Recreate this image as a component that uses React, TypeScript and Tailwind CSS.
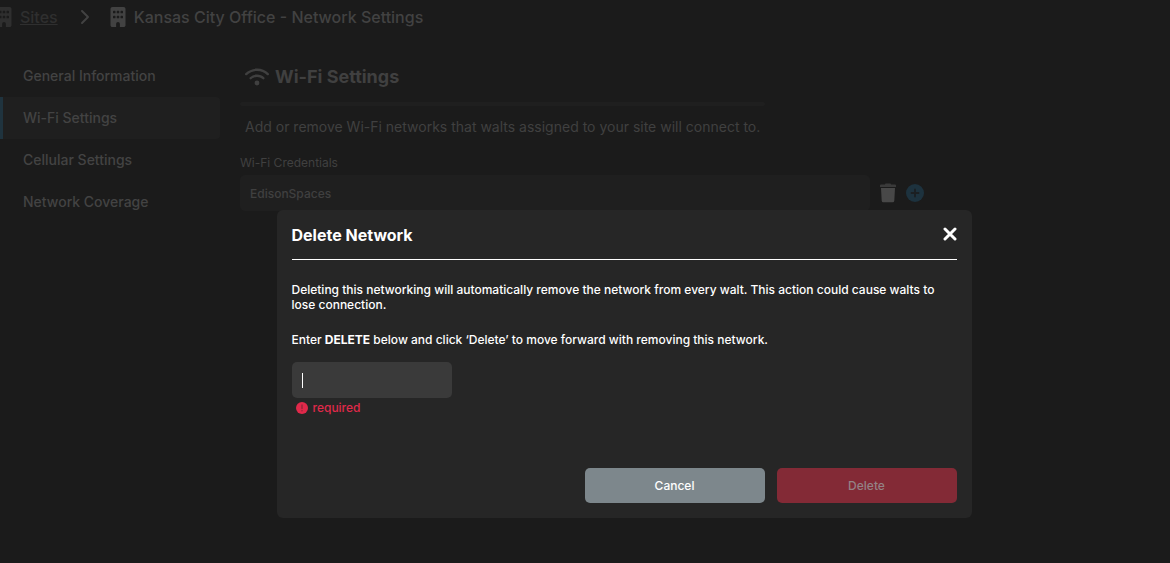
import React, { useState } from 'react';
import { FaBuilding, FaChevronRight, FaWifi } from 'react-icons/fa6';

const tabs = ['General Information', 'Wi-Fi Settings', 'Cellular Settings', 'Network Coverage'];

const TrashIcon = () => (
  <svg viewBox="0 0 16 20" className="h-5 w-4">
    <path d="M5.5.5h5l.7 1H15a1 1 0 0 1 1 1V4H0V2.5a1 1 0 0 1 1-1h3.8z" fill="#3a3a3a" />
    <path d="M1 5h14l-.7 12.7a1.6 1.6 0 0 1-1.6 1.5H3.3a1.6 1.6 0 0 1-1.6-1.5z" fill="#484848" />
  </svg>
);

const PlusIcon = () => (
  <svg viewBox="0 0 18 18" className="h-[18px] w-[18px]">
    <circle cx="9" cy="9" r="9" fill="#1d323e" />
    <path d="M9 5.5v7M5.5 9h7" stroke="#1b1f22" strokeWidth="1.8" strokeLinecap="round" />
  </svg>
);

const CloseIcon = () => (
  <svg viewBox="0 0 14 14" className="h-[14px] w-[14px]">
    <path d="M2 2l10 10M12 2L2 12" stroke="#fff" strokeWidth="3" strokeLinecap="round" />
  </svg>
);

const ErrorIcon = () => (
  <svg viewBox="0 0 12 12" className="h-3 w-3">
    <circle cx="6" cy="6" r="6" fill="#e0294a" />
    <path d="M6 3v3.5" stroke="#96253a" strokeWidth="1.4" strokeLinecap="round" />
    <circle cx="6" cy="8.7" r=".8" fill="#96253a" />
  </svg>
);

const Breadcrumb = () => (
  <nav className="flex h-[33px] items-center font-medium text-[#424242]" aria-label="Breadcrumb">
    <span className="flex w-3 justify-end overflow-hidden text-[#2f2f2f]">
      <FaBuilding className="h-5 w-4 shrink-0" />
    </span>
    <a href="#sites" className="ml-2 text-base text-[#2f2f2f] underline">
      Sites
    </a>
    <FaChevronRight className="mx-5 h-4 w-3" />
    <FaBuilding className="h-5 w-4" />
    <h1 className="ml-2 text-base">Kansas City Office - Network Settings</h1>
  </nav>
);

const Sidebar = () => (
  <nav className="w-[220px] shrink-0 text-sm font-medium text-[#434343]" aria-label="Settings">
    {tabs.map((tab) => (
      <a
        key={tab}
        href="#"
        className={
          tab === 'Wi-Fi Settings'
            ? 'flex h-[42px] items-center rounded-r border-l-3 border-[#1f333e] bg-[#1f1f1f] pl-5'
            : 'flex h-[42px] items-center border-l-3 border-transparent pl-5'
        }
      >
        {tab}
      </a>
    ))}
  </nav>
);

const WifiSettings = () => (
  <section className="ml-5 grow text-[#404040]">
    <div className="max-w-[525px]">
      <h2 className="flex h-11 items-center gap-[6px] pl-[5px] text-lg font-bold">
        <FaWifi className="h-5 w-6" />
        Wi-Fi Settings
      </h2>
      <hr className="mt-[3px] h-1 rounded border-0 bg-[#1f1f1f]" />
    </div>
    <p className="mt-[11px] pl-[5px] text-sm">
      Add or remove Wi-Fi networks that walts assigned to your site will connect to.
    </p>
    <label htmlFor="credentials" className="mt-[18px] block text-xs">
      Wi-Fi Credentials
    </label>
    <div className="mt-1 flex items-center">
      <input
        id="credentials"
        readOnly
        value="EdisonSpaces"
        className="h-9 w-full max-w-[630px] rounded-[5px] bg-[#1f1f1f] px-[10px] text-xs font-medium"
      />
      <button className="ml-[10px]" aria-label="Remove network">
        <TrashIcon />
      </button>
      <button className="ml-[10px]" aria-label="Add network">
        <PlusIcon />
      </button>
    </div>
  </section>
);

const DeleteModal = () => {
  const [value, setValue] = useState('');

  return (
    <div className="fixed inset-0 flex items-start justify-center pt-[210px] pl-[78px]">
      <div
        role="dialog"
        aria-labelledby="modal-title"
        className="w-full max-w-[695px] rounded-md bg-[#262626] p-[15px] text-xs font-medium text-white"
      >
        <div className="flex h-[35px] items-start justify-between border-b border-white">
          <h2 id="modal-title" className="text-base leading-5 font-bold">
            Delete Network
          </h2>
          <button className="mt-[2px]" aria-label="Close">
            <CloseIcon />
          </button>
        </div>
        <p className="mt-[22px] pr-4 leading-[15px]">
          Deleting this networking will automatically remove the network from every walt. This action
          could cause walts to lose connection.
        </p>
        <label htmlFor="confirm" className="mt-5 block leading-[15px]">
          Enter <b>DELETE</b> below and click ‘Delete’ to move forward with removing this network.
        </label>
        <div className="relative mt-[15px] w-40">
          <input
            id="confirm"
            autoFocus
            value={value}
            onChange={(e) => setValue(e.target.value)}
            className={
              value
                ? 'block h-9 w-full rounded-[5px] bg-[#3a3a3a] px-[10px] text-xs caret-white outline-none'
                : 'block h-9 w-full rounded-[5px] bg-[#3a3a3a] px-[10px] text-xs caret-transparent outline-none'
            }
          />
          {!value && (
            <span className="pointer-events-none absolute top-[11px] left-[10px] h-[15px] w-px bg-white" />
          )}
        </div>
        <p className="mt-[2px] flex items-center gap-[5px] pl-1 leading-4 text-[#e0294a]">
          <ErrorIcon />
          required
        </p>
        <div className="mt-[52px] flex justify-end gap-3">
          <button className="h-[35px] w-[180px] rounded-[5px] bg-[#7d878c]">Cancel</button>
          <button
            className="h-[35px] w-[180px] rounded-[5px] bg-[#832a36] text-[#948285]"
            disabled={value !== 'DELETE'}
          >
            Delete
          </button>
        </div>
      </div>
    </div>
  );
};

const App = () => (
  <main className="min-h-screen bg-[#1b1b1b] font-[Inter,sans-serif]">
    <Breadcrumb />
    <div className="flex pt-[22px]">
      <Sidebar />
      <WifiSettings />
    </div>
    <DeleteModal />
  </main>
);

export default App;
